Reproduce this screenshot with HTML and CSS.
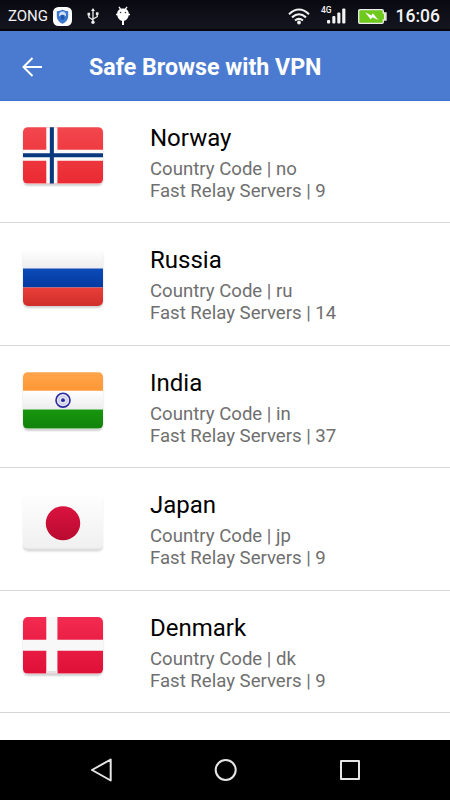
FILE: index.html
```html
<!DOCTYPE html>
<html lang="en">
<head>
<meta charset="utf-8">
<title>Safe Browse with VPN</title>
<link rel="stylesheet" href="styles.css">
</head>
<body>
<div class="screen">
  <div class="status">
    <span class="carrier">ZONG</span>
    <svg class="shield" width="19" height="19" viewBox="0 0 19 19"><rect width="19" height="19" rx="5.5" fill="#fff"/><path d="M9.500 2.500C11.300 3.800 13.200 4.200 15.200 4.200V9c0 3.700-2.500 6.300-5.700 7.800C6.300 15.300 3.800 12.700 3.800 9V4.200C5.800 4.200 7.700 3.800 9.500 2.500Z" fill="#3c78d0"/><path d="M6 9V8a3.500 3.500 0 0 1 7 0v1q-3.500 1.500-7 0Z" fill="#cfe0f8"/><path d="M7.200 8.500q2.300-1.500 4.600 0l-.8 4H8Z" fill="#2359ac"/></svg>
    <svg class="usb" width="12" height="17" viewBox="0 0 12 17" fill="none" stroke="#eee" stroke-width="1.300"><path d="M6 2v12M1.800 6v3.200L6 12M10.200 5.500v3.200L6 11"/><path d="m6 0 2 3H4Z" fill="#eee" stroke="none"/><circle cx="6" cy="14.300" r="1.700" fill="#eee" stroke="none"/><path d="M.5 4.800h2.600v2.600H.5zM8.900 4.300h2.600v2.600H8.900z" fill="#eee" stroke="none"/></svg>
    <svg class="droid" width="14" height="20" viewBox="0 0 14 20"><path d="m3 .8 2 3M11 .8l-2 3" stroke="#fff" stroke-width="1.300"/><path d="M7 13v6" stroke="#fff" stroke-width="2"/><path d="M7 2.500c3.700 0 5.800 2.200 5.800 5.200H14v1.500h-1.300c-.6 3.300-2.600 5.600-5.700 5.600S1.900 12.500 1.300 9.200H0V7.700h1.200C1.200 4.700 3.300 2.500 7 2.500Z" fill="#fff"/><circle cx="4.600" cy="6.500" r=".8" fill="#333"/><circle cx="9.400" cy="6.500" r=".8" fill="#333"/></svg>
    <svg class="wifi" width="22" height="17" viewBox="0 0 22 17" fill="none" stroke="#f0f0f0" stroke-width="2.100"><path d="M1 6.200Q11-3.200 21 6.200M4 9.400q7-6.300 14 0M7 12.500q4-3.300 8 0"/><circle cx="11" cy="14.500" r="1.900" fill="#f0f0f0" stroke="none"/></svg>
    <div class="cell"><span class="cell-type">4G</span><svg width="20" height="16" viewBox="0 0 20 16" fill="#f3f3f3"><rect x="1" y="12" width="3.200" height="3.500" rx="1"/><rect x="6.300" y="8" width="3.100" height="7.500" rx="1"/><rect x="11.300" y="4.500" width="3.100" height="11" rx="1"/><rect x="16.200" y=".5" width="3.200" height="15" rx="1"/></svg></div>
    <svg class="battery" width="29" height="15" viewBox="0 0 29 15"><path d="M2 .7h22q1.300 0 1.300 1.300v2H28v7h-2.700v2q0 1.300-1.300 1.300H2Q.7 14.300.7 13V2Q.7.700 2 .7Z" fill="#6fc91d" stroke="#eee" stroke-width="1.300"/><path d="M26 4.500h1.500v6H26z" fill="#eee"/><path d="m7 3.300 6.500 3.200 1.200-2.200L20.500 11l-6.300-2.800-1.400 2.200Z" fill="#fff"/></svg>
    <span class="clock">16:06</span>
  </div>
  <header class="appbar">
    <svg width="22" height="20" viewBox="0 0 22 20" fill="none" stroke="#fff" stroke-width="2"><path d="M21 10H2.500M11.500 1l-9 9 9 9"/></svg>
    <h1>Safe Browse with VPN</h1>
  </header>
  <main class="list">
    <section class="row">
      <div class="flag"><svg viewBox="0 0 79 56.500" preserveAspectRatio="none"><defs><linearGradient id="no" x2="0" y2="1"><stop stop-color="#f3464d"/><stop offset="1" stop-color="#ea2a32"/></linearGradient></defs><path fill="url(#no)" d="M0 0h79v56.500H0z"/><path d="M28.500 0v56.500M0 28.200h79" stroke="#fafafa" stroke-width="11"/><path d="M28.500 0v56.500M0 28.200h79" stroke="#08397f" stroke-width="4"/></svg></div>
      <div class="info"><h2>Norway</h2><p>Country Code | no</p><p>Fast Relay Servers | 9</p></div>
    </section>
    <section class="row">
      <div class="flag"><svg viewBox="0 0 79 56.500" preserveAspectRatio="none"><defs><linearGradient id="rw" x2="0" y2="1"><stop stop-color="#fff"/><stop offset="1" stop-color="#ececec"/></linearGradient><linearGradient id="rb" x2="0" y2="1"><stop stop-color="#0c4bb8"/><stop offset="1" stop-color="#0439a0"/></linearGradient><linearGradient id="rr" x2="0" y2="1"><stop stop-color="#e93f39"/><stop offset="1" stop-color="#cf2d2a"/></linearGradient></defs><path fill="url(#rw)" d="M0 0h79v19H0z"/><path fill="url(#rb)" d="M0 18.500h79v19H0z"/><path fill="url(#rr)" d="M0 37.500h79v19H0z"/></svg></div>
      <div class="info"><h2>Russia</h2><p>Country Code | ru</p><p>Fast Relay Servers | 14</p></div>
    </section>
    <section class="row">
      <div class="flag"><svg viewBox="0 0 79 56.500" preserveAspectRatio="none"><defs><linearGradient id="io" x2="0" y2="1"><stop stop-color="#ffa54b"/><stop offset="1" stop-color="#ff9736"/></linearGradient><linearGradient id="iw" x2="0" y2="1"><stop stop-color="#fff"/><stop offset="1" stop-color="#ececec"/></linearGradient><linearGradient id="ig" x2="0" y2="1"><stop stop-color="#18970f"/><stop offset="1" stop-color="#118209"/></linearGradient></defs><path fill="url(#io)" d="M0 0h79v19H0z"/><path fill="url(#iw)" d="M0 18.800h79v19H0z"/><path fill="url(#ig)" d="M0 37.600h79v19H0z"/><circle cx="39.500" cy="28.200" r="6.900" fill="#e4e4f2" stroke="#2b2ba0" stroke-width="1.600"/><circle cx="39.500" cy="28.200" r="4" fill="none" stroke="#c4c4e2"/><circle cx="39.500" cy="28.200" r="1.900" fill="#2b2ba0"/></svg></div>
      <div class="info"><h2>India</h2><p>Country Code | in</p><p>Fast Relay Servers | 37</p></div>
    </section>
    <section class="row">
      <div class="flag flag-pale"><svg viewBox="0 0 79 56.500" preserveAspectRatio="none"><defs><linearGradient id="jw" x2="0" y2="1"><stop stop-color="#fff"/><stop offset="1" stop-color="#f0f0f0"/></linearGradient><linearGradient id="jr" x2="0" y2="1"><stop stop-color="#da1340"/><stop offset="1" stop-color="#b90a30"/></linearGradient></defs><path fill="#dedede" d="M0 40h79v16.500H0z"/><rect y="-4" width="79" height="57.500" rx="4" fill="url(#jw)"/><circle cx="39.500" cy="28.200" r="17" fill="url(#jr)"/></svg></div>
      <div class="info"><h2>Japan</h2><p>Country Code | jp</p><p>Fast Relay Servers | 9</p></div>
    </section>
    <section class="row">
      <div class="flag"><svg viewBox="0 0 79 56.500" preserveAspectRatio="none"><defs><linearGradient id="dk" x2="0" y2="1"><stop stop-color="#f32a51"/><stop offset="1" stop-color="#df1037"/></linearGradient></defs><path fill="url(#dk)" d="M0 0h79v56.500H0z"/><path d="M28.500 0v56.500M0 28.200h79" stroke="#f8f8f8" stroke-width="11"/><path fill="#e2e2e2" d="M23 54h11v2.500H23z"/></svg></div>
      <div class="info"><h2>Denmark</h2><p>Country Code | dk</p><p>Fast Relay Servers | 9</p></div>
    </section>
  </main>
  <nav class="navbar">
    <svg width="24" height="24" viewBox="0 0 24 24"><path d="M20.700 1.500v21L2 12Z"/></svg>
    <svg width="24" height="24" viewBox="0 0 24 24"><circle cx="11.700" cy="12" r="10"/></svg>
    <svg width="24" height="24" viewBox="0 0 24 24"><rect x="3" y="3" width="18" height="18"/></svg>
  </nav>
</div>
</body>
</html>
```
FILE: styles.css
```css
* { box-sizing: border-box; margin: 0; padding: 0; }
body { width: 450px; height: 800px; overflow: hidden; font-family: Roboto, sans-serif; background: #fff; }
svg { display: block; flex: none; }
.screen { height: 800px; display: flex; flex-direction: column; }
.status { height: 31px; flex: none; display: flex; align-items: center; padding: 1px 10px 0 8px; color: #f2f2f2; background: linear-gradient(#090a10, #14151f 94%, #07050a 95%); }
.carrier { font-size: 15px; width: 45px; }
.usb { margin-left: 15px; }
.droid { margin-left: 17px; }
.wifi { margin-left: 158px; }
.cell { width: 26px; height: 20px; margin-left: 11px; display: flex; align-items: flex-end; position: relative; }
.cell svg { margin-left: 5px; margin-bottom: 2px; }
.cell-type { position: absolute; left: 0; top: 0; font-size: 8.5px; line-height: 9px; font-weight: 500; }
.battery { margin-left: 11px; }
.clock { margin-left: auto; font-size: 17.5px; font-weight: 500; }
.appbar { height: 70px; flex: none; display: flex; align-items: center; padding: 2px 0 0 20.5px; background: #4b7bd1; border-bottom: 1px solid #3c71cb; color: #fff; }
.appbar h1 { font-size: 23.2px; line-height: 28px; font-weight: 700; margin-left: 46.500px; padding-top: 1px; }
.list { flex: 1; overflow: hidden; }
.row { height: 122.45px; display: flex; padding: 22px 0 0 23px; border-bottom: 1px solid #d6d6d6; }
.flag { width: 80px; height: 56.500px; margin-top: 4.300px; border-radius: 5px; overflow: hidden; box-shadow: 0 1.500px 2px rgba(0,0,0,.18); clip-path: inset(0 -3px -4px); }
.flag svg { width: 100%; height: 100%; }
.flag-pale { box-shadow: 0 1px 2px rgba(0,0,0,.1); }
.info { margin-left: 47px; }
.info h2 { font-size: 24px; line-height: 30px; font-weight: 400; color: #000; margin-bottom: 5px; }
.info p { font-size: 18.6px; line-height: 22px; color: #6f6f6f; }
.navbar { height: 60px; flex: none; background: #000; display: flex; align-items: center; justify-content: space-between; padding: 0 88px 0 90px; }
.navbar svg { fill: none; stroke: #e6e6e6; stroke-width: 2; stroke-linejoin: round; }
```
